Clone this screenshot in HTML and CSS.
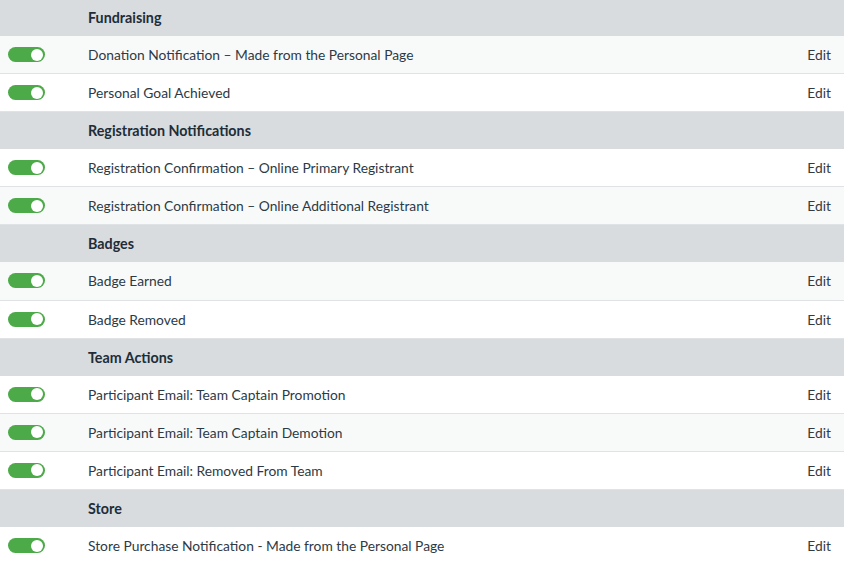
FILE: index.html
```html
<!DOCTYPE html>
<html>
<head>
<meta charset="utf-8">
<link rel="stylesheet" href="styles.css">
</head>
<body>
<div class="table">
  <div class="head"><span class="title">Fundraising</span></div>
  <div class="row alt"><span class="toggle"><span class="knob"></span></span><span class="label">Donation Notification – Made from the Personal Page</span><a class="edit">Edit</a></div>
  <div class="row"><span class="toggle"><span class="knob"></span></span><span class="label">Personal Goal Achieved</span><a class="edit">Edit</a></div>

  <div class="head"><span class="title">Registration Notifications</span></div>
  <div class="row"><span class="toggle"><span class="knob"></span></span><span class="label">Registration Confirmation – Online Primary Registrant</span><a class="edit">Edit</a></div>
  <div class="row alt"><span class="toggle"><span class="knob"></span></span><span class="label">Registration Confirmation – Online Additional Registrant</span><a class="edit">Edit</a></div>

  <div class="head"><span class="title">Badges</span></div>
  <div class="row alt"><span class="toggle"><span class="knob"></span></span><span class="label">Badge Earned</span><a class="edit">Edit</a></div>
  <div class="row"><span class="toggle"><span class="knob"></span></span><span class="label">Badge Removed</span><a class="edit">Edit</a></div>

  <div class="head"><span class="title">Team Actions</span></div>
  <div class="row"><span class="toggle"><span class="knob"></span></span><span class="label">Participant Email: Team Captain Promotion</span><a class="edit">Edit</a></div>
  <div class="row alt"><span class="toggle"><span class="knob"></span></span><span class="label">Participant Email: Team Captain Demotion</span><a class="edit">Edit</a></div>
  <div class="row"><span class="toggle"><span class="knob"></span></span><span class="label">Participant Email: Removed From Team</span><a class="edit">Edit</a></div>

  <div class="head"><span class="title">Store</span></div>
  <div class="row"><span class="toggle"><span class="knob"></span></span><span class="label">Store Purchase Notification - Made from the Personal Page</span><a class="edit">Edit</a></div>
</div>
</body>
</html>
```
FILE: styles.css
```css
html, body {
  margin: 0;
  padding: 0;
  background: #ffffff;
}
body {
  font-family: "Lato", "Open Sans", sans-serif;
  color: #2c3a46;
  font-size: 13.8px;
}
.table {
  display: flex;
  flex-direction: column;
  margin-top: -1px;
}
.head {
  height: 37px;
  background: #d8dcde;
  display: flex;
  align-items: center;
  padding-left: 88px;
  flex: none;
}
.title {
  font-weight: 700;
  font-size: 14.3px;
  color: #202d38;
}
.row {
  height: 37.12px;
  border-bottom: 1px solid #dfe3e5;
  background: #ffffff;
  display: flex;
  align-items: center;
  padding-left: 8px;
  padding-right: 13px;
  flex: none;
}
.row.alt {
  background: #f8fafa;
}
.toggle {
  width: 37px;
  height: 15px;
  border-radius: 8px;
  background: #4caa48;
  display: flex;
  align-items: center;
  justify-content: flex-end;
  padding-right: 2px;
  box-sizing: border-box;
  flex: none;
}
.knob {
  width: 12px;
  height: 12px;
  border-radius: 50%;
  background: #ffffff;
}
.label {
  margin-left: 43px;
  flex: 1;
  color: #2c3a46;
}
.edit {
  color: #333b42;
}
```
